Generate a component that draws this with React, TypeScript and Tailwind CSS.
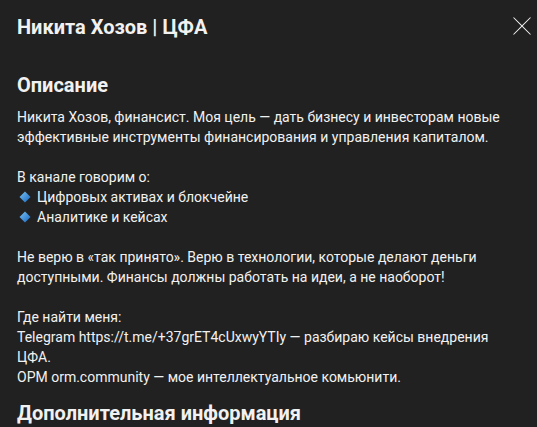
const FONT = { fontFamily: 'Roboto, "Noto Sans", Arial, sans-serif' }

function Diamond() {
  return (
    <svg width="12" height="12" viewBox="0 0 12 12" className="shrink-0">
      <defs>
        <linearGradient id="dg" x1="0" y1="0" x2="1" y2="1">
          <stop offset="0" stopColor="#7cc4f5" />
          <stop offset="1" stopColor="#1565c0" />
        </linearGradient>
      </defs>
      <polygon points="6,0.5 11.5,6 6,11.5 0.5,6" fill="url(#dg)" />
    </svg>
  )
}

function CloseIcon() {
  return (
    <svg width="24" height="24" viewBox="0 0 24 24" fill="#f1f1f1" className="mt-px">
      <path d="m12.71 12 8.15 8.15-.71.71L12 12.71l-8.15 8.15-.71-.71L11.29 12 3.15 3.85l.71-.71L12 11.29l8.15-8.15.71.71L12.71 12z" />
    </svg>
  )
}

const Blank = () => <div className="h-5" />

export default function App() {
  return (
    <div className="w-[537px] h-[427px] overflow-hidden bg-[#212121] text-[#f1f1f1]" style={FONT}>
      <div className="flex items-start justify-between pl-[17px] pr-[3px] pt-[13px]">
        <h1 className="text-[20px] leading-7 font-bold">Никита Хозов | ЦФА</h1>
        <CloseIcon />
      </div>

      <div className="px-[17px] mt-[30px]">
        <h2 className="text-[20px] leading-7 font-bold">Описание</h2>
        <div className="mt-2 text-[14px] leading-5">
          <div>Никита Хозов, финансист. Моя цель — дать бизнесу и инвесторам новые</div>
          <div>эффективные инструменты финансирования и управления капиталом.</div>
          <Blank />
          <div>В канале говорим о:</div>
          <div className="flex items-center gap-[6px] pl-[2px]">
            <Diamond />
            <span>Цифровых активах и блокчейне</span>
          </div>
          <div className="flex items-center gap-[6px] pl-[2px]">
            <Diamond />
            <span>Аналитике и кейсах</span>
          </div>
          <Blank />
          <div>Не верю в «так принято». Верю в технологии, которые делают деньги</div>
          <div>доступными. Финансы должны работать на идеи, а не наоборот!</div>
          <Blank />
          <div>Где найти меня:</div>
          <div>Telegram https://t.me/+37grET4cUxwyYTIy — разбираю кейсы внедрения</div>
          <div>ЦФА.</div>
          <div>ОРМ orm.community — мое интеллектуальное комьюнити.</div>
        </div>

        <h2 className="mt-3 text-[20px] leading-7 font-bold">Дополнительная информация</h2>
      </div>
    </div>
  )
}
